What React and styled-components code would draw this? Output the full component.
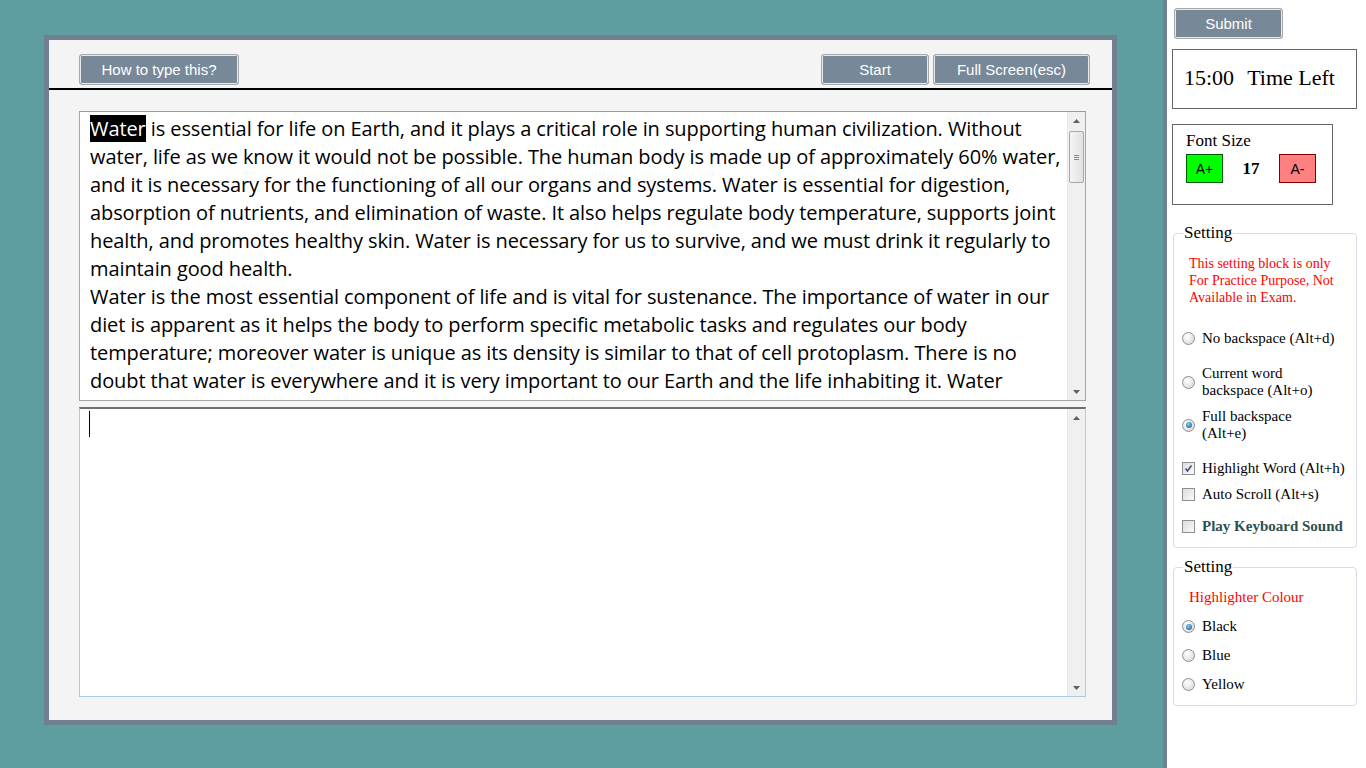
import React from "react"
import styled, { createGlobalStyle } from "styled-components"

const GlobalStyle = createGlobalStyle`
  html, body {
    margin: 0;
    padding: 0;
    background: #5f9ea0;
    overflow: hidden;
  }
`

const Page = styled.div`
  display: flex;
  width: 1366px;
  height: 768px;
  background: #5f9ea0;
`

const Main = styled.div`
  flex: 1;
  padding: 35px 0 0 44px;
`

const Panel = styled.div`
  width: 1063px;
  height: 680px;
  background: #f4f4f4;
  border: 5px solid #708090;
  display: flex;
  flex-direction: column;
`

const Toolbar = styled.div`
  height: 50px;
  display: flex;
  align-items: flex-start;
  padding: 14px 22px 0 30px;
  box-sizing: border-box;
  gap: 4px;
  border-bottom: 2px solid #000;
`

const Spacer = styled.div`
  flex: 1;
`

const GrayButton = styled.button`
  height: 31px;
  width: ${({ w }) => w}px;
  background: #778899;
  color: #fff;
  font-family: "Liberation Sans", Arial, sans-serif;
  font-size: 15px;
  border: 1px solid #a8a8a8;
  border-radius: 3px;
  box-shadow: inset 0 0 0 1px #e8e8e8;
  padding: 0;
  cursor: pointer;
`

const Body = styled.div`
  display: flex;
  flex-direction: column;
  gap: 6px;
  padding: 21px 26px 0 30px;
`

const Box = styled.div`
  height: 290px;
  display: flex;
  box-sizing: border-box;
  background: #fff;
  border: 1px solid ${({ focused }) => (focused ? "#a9cbe4" : "#a5a5a5")};
  border-top: ${({ focused }) => (focused ? "2px solid #6e6e6e" : "1px solid #9a9a9a")};
`

const Passage = styled.div`
  flex: 1;
  overflow: hidden;
  padding: 3px 0 0 10px;
  font-family: "Open Sans", "Noto Sans", sans-serif;
  font-size: 20px;
  letter-spacing: -0.09px;
  line-height: 28px;
  color: #000;
`

const Line = styled.div`
  white-space: nowrap;
`

const Mark = styled.span`
  background: #000;
  color: #fff;
`

const Typing = styled.div`
  flex: 1;
  padding: 2px 0 0 9px;
`

const Caret = styled.div`
  width: 1px;
  height: 26px;
  background: #000;
`

const ScrollBar = styled.div`
  width: 17px;
  flex: none;
  background: #f0f0f0;
  border-left: 1px solid #e6e6e6;
  display: flex;
  flex-direction: column;
  align-items: center;
`

const Arrow = styled.div`
  height: 17px;
  display: flex;
  align-items: center;
  justify-content: center;
`

const Track = styled.div`
  flex: 1;
  width: 100%;
  padding-top: 2px;
  box-sizing: border-box;
`

const Thumb = styled.div`
  margin: 0 1px;
  height: 50px;
  border: 1px solid #a8a8a8;
  border-radius: 2px;
  background: linear-gradient(to right, #f4f4f4, #e2e2e2);
  display: flex;
  flex-direction: column;
  align-items: center;
  justify-content: center;
  gap: 1px;
`

const Grip = styled.div`
  width: 5px;
  height: 1px;
  background: #8a8a8a;
`

const Tri = ({ up }) => (
  <svg width="7" height="4" viewBox="0 0 7 4">
    <path d={up ? "M0 4 L3.5 0 L7 4 Z" : "M0 0 L3.5 4 L7 0 Z"} fill="#606060" />
  </svg>
)

const Scroller = ({ thumb }) => (
  <ScrollBar>
    <Arrow>
      <Tri up />
    </Arrow>
    <Track>
      {thumb && (
        <Thumb>
          <Grip />
          <Grip />
          <Grip />
        </Thumb>
      )}
    </Track>
    <Arrow>
      <Tri />
    </Arrow>
  </ScrollBar>
)

const Side = styled.div`
  width: 194px;
  background: #fff;
  border-left: 4px solid #708090;
  padding: 8px 0 0 5px;
  display: flex;
  flex-direction: column;
  font-family: "Liberation Serif", "Times New Roman", serif;
`

const SubmitRow = styled.div`
  padding-left: 2px;
`

const TimeBox = styled.div`
  margin-top: 10px;
  width: 185px;
  height: 60px;
  box-sizing: border-box;
  border: 1px solid #666;
  display: flex;
  align-items: center;
  gap: 13px;
  padding: 0 0 3px 11px;
  font-size: 22px;
`

const FontBox = styled.div`
  margin-top: 15px;
  width: 161px;
  height: 81px;
  border: 1px solid #666;
  padding: 6px 0 0 13px;
  box-sizing: border-box;
  font-size: 17px;
`

const FontRow = styled.div`
  margin-top: 3px;
  display: flex;
  align-items: center;
`

const SizeButton = styled.button`
  width: 37px;
  height: 29px;
  padding: 0;
  background: ${({ bg }) => bg};
  border: 1px solid ${({ edge }) => edge};
  font-family: "Liberation Sans", Arial, sans-serif;
  font-size: 14px;
  color: #000;
`

const SizeValue = styled.div`
  width: 56px;
  text-align: center;
  font-weight: bold;
  font-size: 17px;
`

const Fieldset = styled.fieldset`
  margin: ${({ top }) => top}px 0 0 1px;
  width: 184px;
  box-sizing: border-box;
  border: 1px solid #d5dce4;
  border-radius: 4px;
  padding: 0 0 ${({ bottom }) => bottom}px 8px;
  legend {
    font-size: 17px;
    padding: 0 1px;
    margin-left: 1px;
  }
`

const Note = styled.div`
  color: #ff0000;
  font-size: ${({ size }) => size}px;
  line-height: 17px;
  padding: ${({ pad }) => pad};
`

const Option = styled.label`
  display: flex;
  align-items: center;
  gap: 7px;
  font-size: 15px;
  line-height: 17px;
  color: ${({ tone }) => tone || "#000"};
  font-weight: ${({ bold }) => (bold ? "bold" : "normal")};
  margin-top: ${({ gap }) => gap}px;
`

const RadioDot = styled.span`
  width: 11px;
  height: 11px;
  flex: none;
  border-radius: 50%;
  border: 1px solid #8e8f8f;
  background: radial-gradient(circle at 40% 35%, #ffffff, #d2d2d2);
  display: flex;
  align-items: center;
  justify-content: center;
  &::after {
    content: "";
    display: ${({ on }) => (on ? "block" : "none")};
    width: 6px;
    height: 6px;
    border-radius: 50%;
    background: radial-gradient(circle at 40% 35%, #7fd0f5, #0d4e8a);
  }
`

const CheckBox = styled.span`
  width: 11px;
  height: 11px;
  flex: none;
  border: 1px solid #8e8f8f;
  background: linear-gradient(to bottom right, #dcdcdc, #fbfbfb);
  display: flex;
  align-items: center;
  justify-content: center;
`

const Radio = ({ on, children, gap }) => (
  <Option gap={gap}>
    <RadioDot on={on} />
    <span>{children}</span>
  </Option>
)

const Check = ({ on, children, gap, bold, tone }) => (
  <Option gap={gap} bold={bold} tone={tone}>
    <CheckBox>
      {on && (
        <svg width="9" height="9" viewBox="0 0 9 9">
          <path d="M1.5 4.5 L3.5 7 L7.5 1.5" stroke="#3d4f86" strokeWidth="1.6" fill="none" />
        </svg>
      )}
    </CheckBox>
    <span>{children}</span>
  </Option>
)

const passage = [
  "is essential for life on Earth, and it plays a critical role in supporting human civilization. Without",
  "water, life as we know it would not be possible. The human body is made up of approximately 60% water,",
  "and it is necessary for the functioning of all our organs and systems. Water is essential for digestion,",
  "absorption of nutrients, and elimination of waste. It also helps regulate body temperature, supports joint",
  "health, and promotes healthy skin. Water is necessary for us to survive, and we must drink it regularly to",
  "maintain good health.",
  "Water is the most essential component of life and is vital for sustenance. The importance of water in our",
  "diet is apparent as it helps the body to perform specific metabolic tasks and regulates our body",
  "temperature; moreover water is unique as its density is similar to that of cell protoplasm. There is no",
  "doubt that water is everywhere and it is very important to our Earth and the life inhabiting it. Water",
  "covers around seventy one percent of the surface of our planet and it is found in oceans, rivers, lakes,",
]

export default function App() {
  return (
    <Page>
      <GlobalStyle />
      <Main>
        <Panel>
          <Toolbar>
            <GrayButton w={160}>How to type this?</GrayButton>
            <Spacer />
            <GrayButton w={108}>Start</GrayButton>
            <GrayButton w={157}>Full Screen(esc)</GrayButton>
          </Toolbar>
          <Body>
            <Box>
              <Passage>
                {passage.map((text, i) => (
                  <Line key={i}>
                    {i === 0 && (
                      <>
                        <Mark>Water</Mark>{" "}
                      </>
                    )}
                    {text}
                  </Line>
                ))}
              </Passage>
              <Scroller thumb />
            </Box>
            <Box focused>
              <Typing>
                <Caret />
              </Typing>
              <Scroller />
            </Box>
          </Body>
        </Panel>
      </Main>
      <Side>
        <SubmitRow>
          <GrayButton w={109}>Submit</GrayButton>
        </SubmitRow>
        <TimeBox>
          <span>15:00</span>
          <span>Time Left</span>
        </TimeBox>
        <FontBox>
          Font Size
          <FontRow>
            <SizeButton bg="#00ff00" edge="#005a00">A+</SizeButton>
            <SizeValue>17</SizeValue>
            <SizeButton bg="#ff8080" edge="#800000">A-</SizeButton>
          </FontRow>
        </FontBox>
        <Fieldset top={18} bottom={12}>
          <legend>Setting</legend>
          <Note size={14} pad="12px 0 0 7px">
            This setting block is only
            <br />
            For Practice Purpose, Not
            <br />
            Available in Exam.
          </Note>
          <Radio gap={24}>No backspace (Alt+d)</Radio>
          <Radio gap={18}>
            Current word
            <br />
            backspace (Alt+o)
          </Radio>
          <Radio gap={9} on>
            Full backspace
            <br />
            (Alt+e)
          </Radio>
          <Check gap={18} on>
            Highlight Word (Alt+h)
          </Check>
          <Check gap={9}>Auto Scroll (Alt+s)</Check>
          <Check gap={15} bold tone="#2f4f4f">
            Play Keyboard Sound
          </Check>
        </Fieldset>
        <Fieldset top={9} bottom={12}>
          <legend>Setting</legend>
          <Note size={15} pad="12px 0 0 7px">
            Highlighter Colour
          </Note>
          <Radio gap={12} on>Black</Radio>
          <Radio gap={12}>Blue</Radio>
          <Radio gap={12}>Yellow</Radio>
        </Fieldset>
      </Side>
    </Page>
  )
}
